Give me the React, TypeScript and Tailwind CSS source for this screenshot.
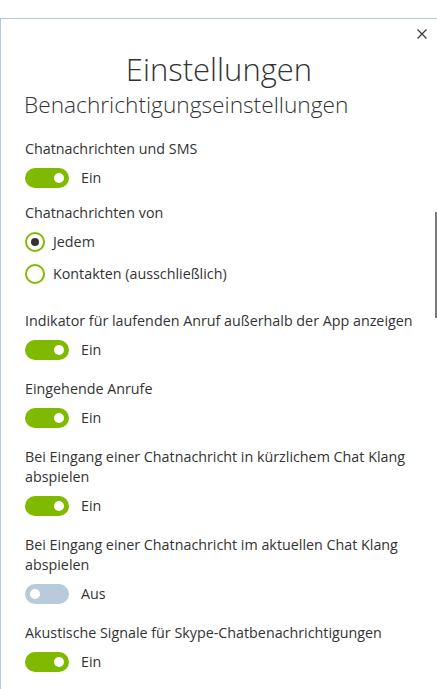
import React from 'react';

const FONT = { fontFamily: '"Open Sans", "Noto Sans", "Liberation Sans", sans-serif' };

function Toggle({ on }: { on: boolean }) {
  return (
    <div className="flex items-center h-[20px]">
      <span
        className={
          on
            ? 'relative inline-block w-[44px] h-[20px] rounded-full bg-[#7fba00]'
            : 'relative inline-block w-[44px] h-[20px] rounded-full bg-[#b9cbdb]'
        }
      >
        <span
          className={
            on
              ? 'absolute top-[5px] left-[29px] w-[10px] h-[10px] rounded-full bg-white'
              : 'absolute top-[5px] left-[5px] w-[10px] h-[10px] rounded-full bg-white'
          }
        />
      </span>
      <span className="ml-[12px] text-[14.3px] leading-[20px] text-[#333]">{on ? 'Ein' : 'Aus'}</span>
    </div>
  );
}

function Radio({ checked, label }: { checked: boolean; label: string }) {
  return (
    <div className="flex items-center h-[20px]">
      <span className="flex items-center justify-center w-[20px] h-[20px] rounded-full border-2 border-[#7fba00]">
        {checked && <span className="w-[8px] h-[8px] rounded-full bg-[#333]" />}
      </span>
      <span className="ml-[8px] text-[14.3px] leading-[20px] text-[#333]">{label}</span>
    </div>
  );
}

function Setting({ label, on }: { label: string; on: boolean }) {
  return (
    <div className="flex flex-col gap-[9px]">
      <div className="text-[14.3px] leading-[20px] text-[#333]">{label}</div>
      <Toggle on={on} />
    </div>
  );
}

export default function App() {
  return (
    <div className="relative w-[437px] h-[689px] bg-white overflow-hidden" style={FONT}>
      <div className="mt-[18px] h-[671px] border-t border-l border-[#b4c8da]">
        <div className="flex justify-end pt-[10px] pr-[10px]">
          <svg width="10" height="10" viewBox="0 0 10 10" className="text-[#333]">
            <path d="M0.5 0.5 L9.5 9.5 M9.5 0.5 L0.5 9.5" stroke="currentColor" strokeWidth="1.1" fill="none" />
          </svg>
        </div>
        <h1 className="mt-[13px] text-center text-[31px] leading-[34px] font-light text-[#333]">Einstellungen</h1>
        <h2 className="mt-[7px] pl-[23px] text-[22.7px] leading-[24px] font-light text-[#333]">
          Benachrichtigungseinstellungen
        </h2>
        <div className="mt-[22px] pl-[24px] pr-[20px] flex flex-col">
          <Setting label="Chatnachrichten und SMS" on />
          <div className="mt-[15px] flex flex-col">
            <div className="text-[14.3px] leading-[20px] text-[#333]">Chatnachrichten von</div>
            <div className="mt-[9px] flex flex-col gap-[12px]">
              <Radio checked label="Jedem" />
              <Radio checked={false} label="Kontakten (ausschließlich)" />
            </div>
          </div>
          <div className="mt-[27px] flex flex-col gap-[19px]">
            <Setting label="Indikator für laufenden Anruf außerhalb der App anzeigen" on />
            <Setting label="Eingehende Anrufe" on />
            <Setting label="Bei Eingang einer Chatnachricht in kürzlichem Chat Klang abspielen" on />
            <Setting label="Bei Eingang einer Chatnachricht im aktuellen Chat Klang abspielen" on={false} />
            <Setting label="Akustische Signale für Skype-Chatbenachrichtigungen" on />
          </div>
        </div>
      </div>
      <div className="absolute left-[435px] top-[212px] w-[2px] h-[106px] bg-[#7a7a7a]" />
    </div>
  );
}
